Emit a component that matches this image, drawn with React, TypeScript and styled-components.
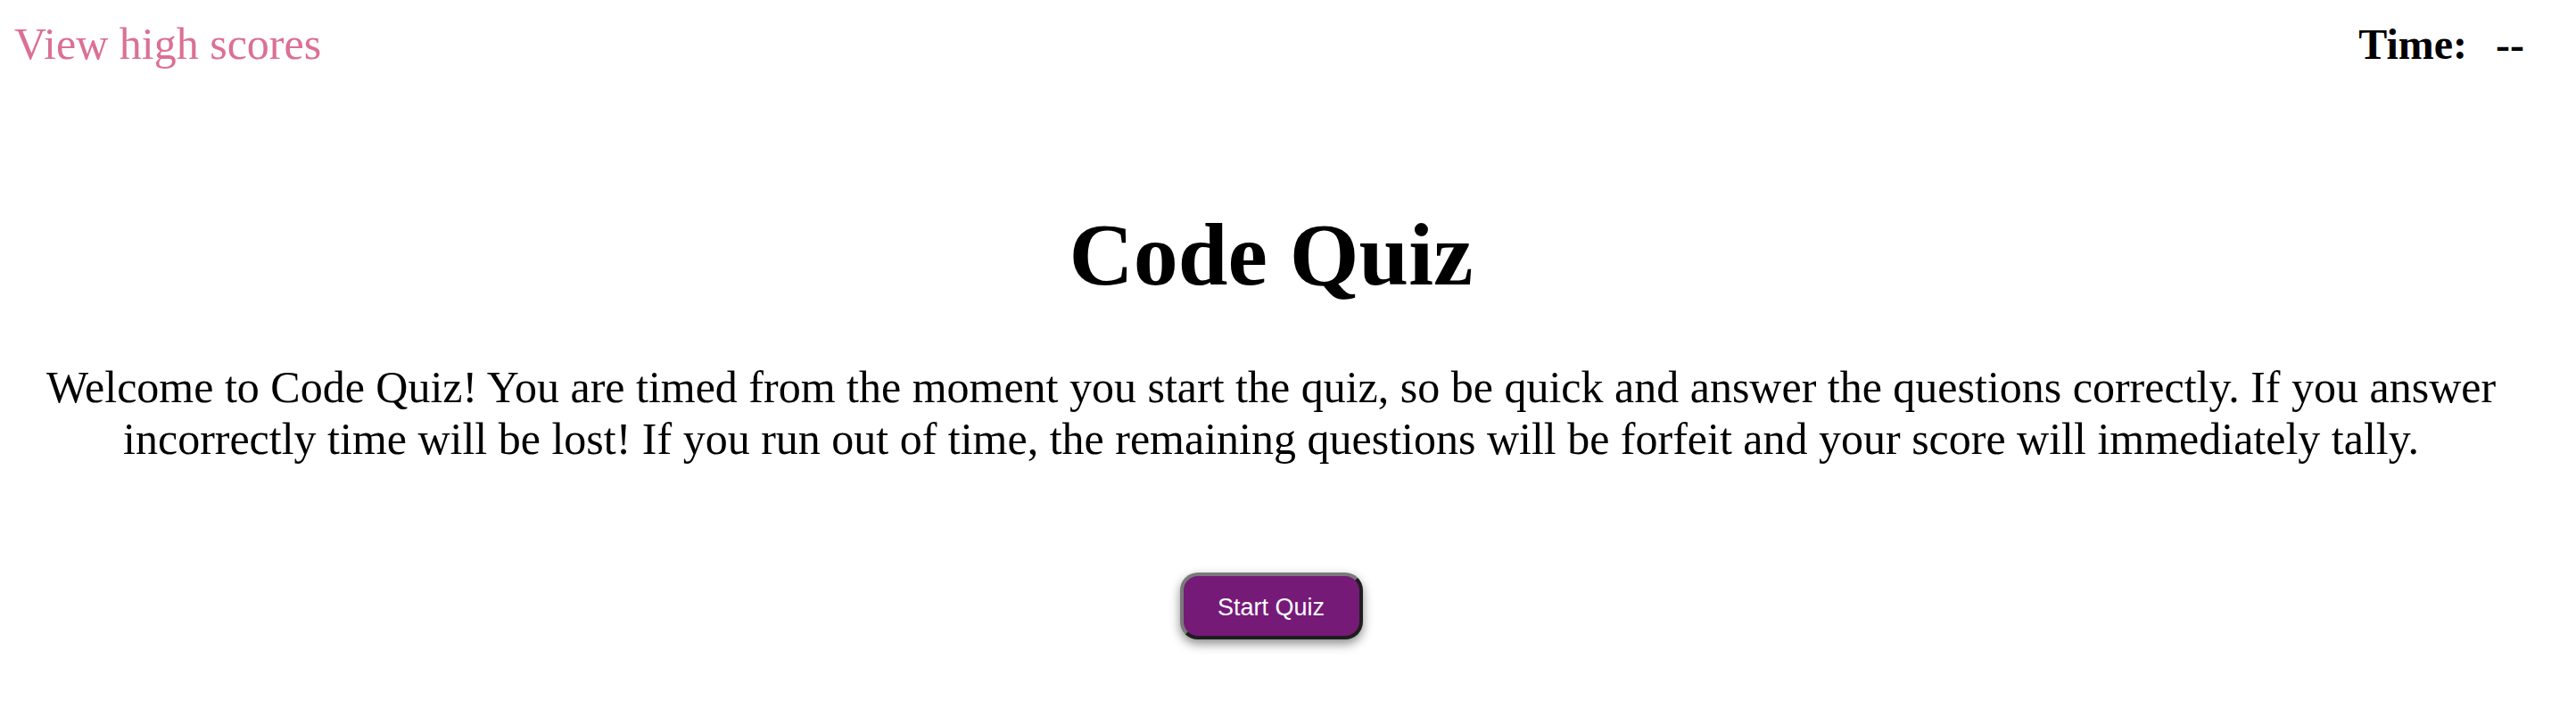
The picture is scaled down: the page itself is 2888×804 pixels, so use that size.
import React from "react";
import styled, { createGlobalStyle } from "styled-components";

const GlobalStyle = createGlobalStyle`
  html, body {
    margin: 0;
    padding: 0;
    background: #ffffff;
  }
  body {
    font-family: "Liberation Serif", "Times New Roman", serif;
    color: #000000;
  }
`;

const Page = styled.div`
  padding: 21px 54px 40px 16px;
  display: flex;
  flex-direction: column;
`;

const Header = styled.header`
  display: flex;
  justify-content: space-between;
  align-items: baseline;
  font-size: 50px;
  line-height: 57px;
`;

const HighScoresLink = styled.a`
  color: #db7093;
  text-decoration: none;
  cursor: pointer;
`;

const Timer = styled.div`
  font-weight: bold;
  font-size: 48px;
  display: flex;
  gap: 32px;
  margin-right: 4px;
`;

const Main = styled.main`
  display: flex;
  flex-direction: column;
  align-items: center;
  text-align: center;
`;

const Title = styled.h1`
  margin: 150px 0 0;
  font-size: 100px;
  line-height: 115px;
  font-weight: bold;
`;

const Intro = styled.p`
  margin: 62px 0 0;
  font-size: 50px;
  line-height: 58px;
`;

const StartButton = styled.button`
  margin-top: 121px;
  width: 205px;
  height: 75px;
  box-sizing: border-box;
  background: #761a78;
  color: #ffffff;
  font-family: "Liberation Sans", Arial, sans-serif;
  font-size: 27px;
  border-style: solid;
  border-width: 4px;
  border-color: #7a7a7a #1e1e1e #1e1e1e #7a7a7a;
  border-radius: 20px;
  box-shadow: 0 5px 12px rgba(0, 0, 0, 0.45);
  cursor: pointer;
  padding: 3px 0 0;
`;

export default function App() {
  return (
    <>
      <GlobalStyle />
      <Page>
        <Header>
          <HighScoresLink>View high scores</HighScoresLink>
          <Timer>
            <span>Time:</span>
            <span>--</span>
          </Timer>
        </Header>
        <Main>
          <Title>Code Quiz</Title>
          <Intro>
            Welcome to Code Quiz! You are timed from the moment you start the quiz, so be quick and answer the
            questions correctly. If you answer incorrectly time will be lost! If you run out of time, the remaining
            questions will be forfeit and your score will immediately tally.
          </Intro>
          <StartButton>Start Quiz</StartButton>
        </Main>
      </Page>
    </>
  );
}
